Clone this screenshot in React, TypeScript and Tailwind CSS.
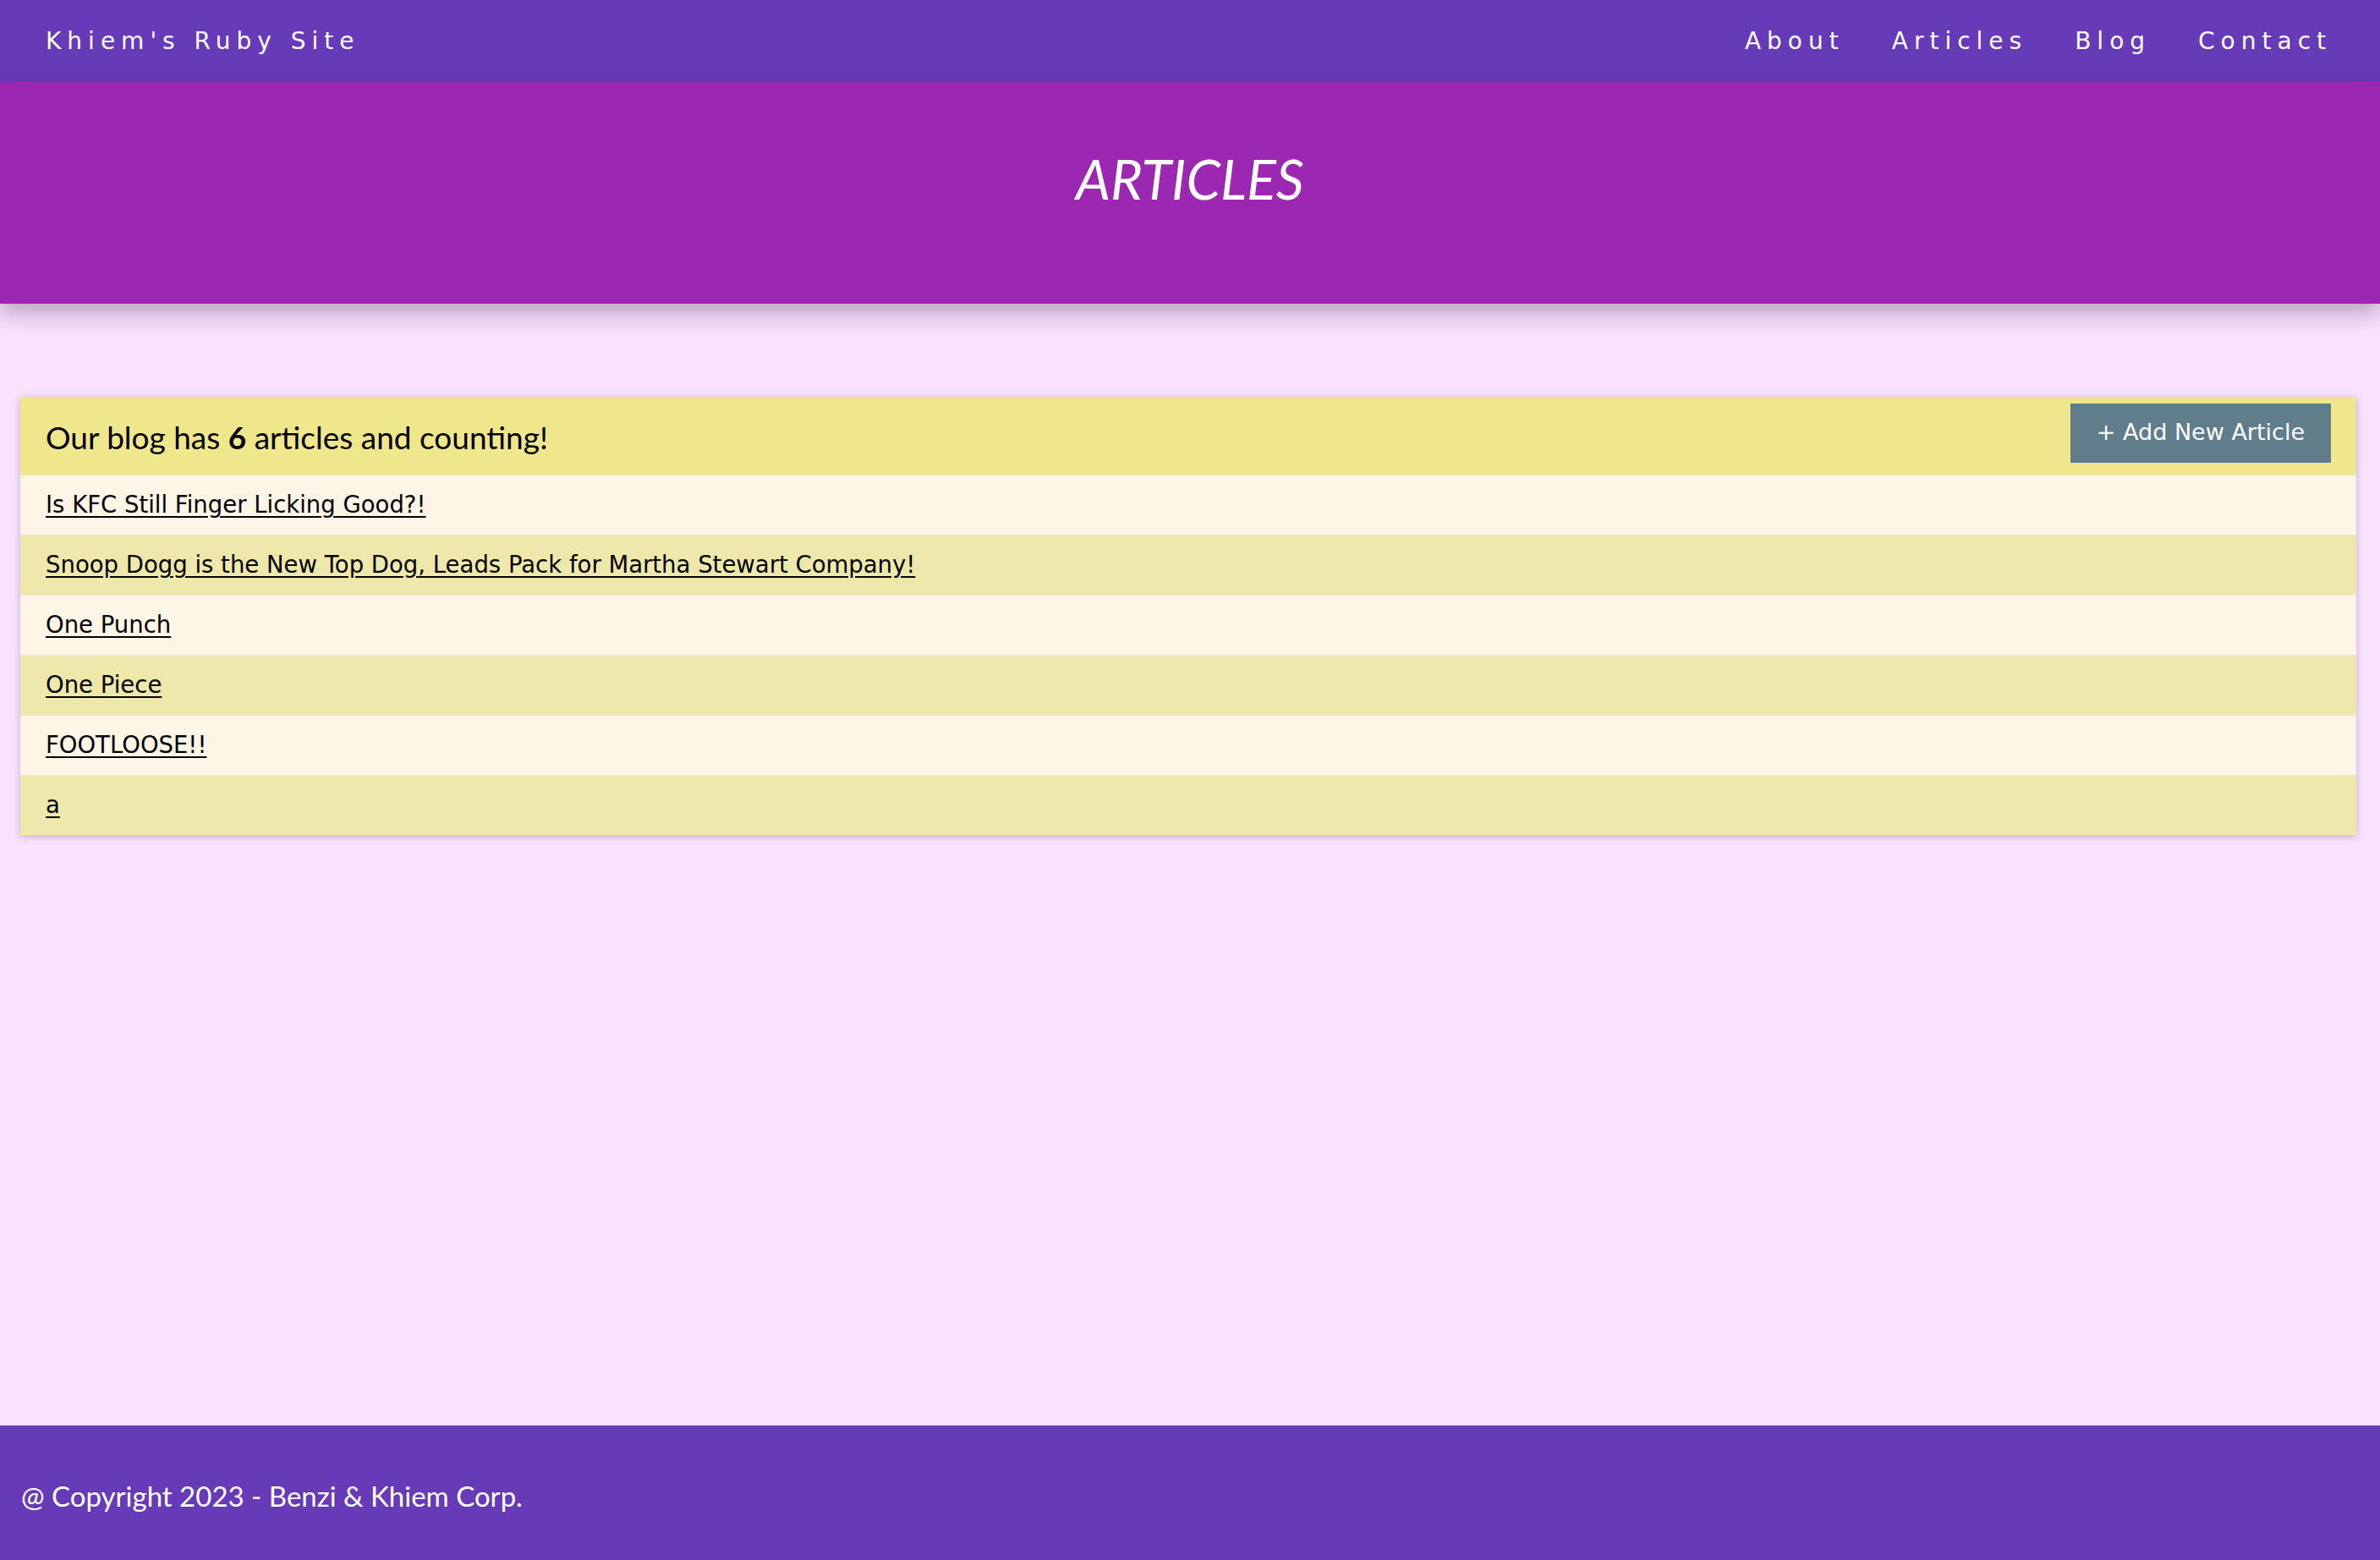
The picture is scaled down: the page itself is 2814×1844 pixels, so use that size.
const articles: string[] = [
  "Is KFC Still Finger Licking Good?!",
  "Snoop Dogg is the New Top Dog, Leads Pack for Martha Stewart Company!",
  "One Punch",
  "One Piece",
  "FOOTLOOSE!!",
  "a",
];

const navLinks = ["About", "Articles", "Blog", "Contact"];

const App: React.FC = () => {
  return (
    <div className="min-h-screen flex flex-col bg-[#f8e2fd] font-['Lato',sans-serif]">
      {/* top navigation */}
      <nav className="h-[97px] bg-[#673ab7] flex items-center justify-between pl-[54px] pr-[57px] text-white font-['DejaVu_Sans',sans-serif] text-[28px] tracking-[7px]">
        <a href="#" className="leading-none">Khiem's Ruby Site</a>
        <ul className="flex items-center gap-[56px]">
          {navLinks.map((link) => (
            <li key={link}>
              <a href="#" className="leading-none">{link}</a>
            </li>
          ))}
        </ul>
      </nav>

      {/* page heading */}
      <header className="relative h-[262px] bg-[#9c27b0] shadow-[0_12px_24px_rgba(60,20,70,0.3)] flex justify-center pt-[82px]">
        <h1 className="text-white italic text-[65px] leading-none h-fit">ARTICLES</h1>
      </header>

      <main className="flex-1 pt-[110px] pl-[24px] pr-[28px]">
        <div className="shadow-[0_2px_8px_rgba(90,60,110,0.3)]">
          <div className="h-[92px] bg-[#f0e68c] flex items-center justify-between pl-[30px] pr-[30px]">
            <p className="text-[37px] text-black leading-none pt-[2px]">
              Our blog has <strong className="font-bold">6</strong> articles and counting!
            </p>
            <button className="h-[70px] px-[31px] bg-[#607d8b] text-white font-['DejaVu_Sans',sans-serif] text-[27px] -mt-[7px]">
              + Add New Article
            </button>
          </div>
          {articles.map((title, i) => (
            <div
              key={title}
              className={
                i % 2 === 0
                  ? "h-[71px] flex items-center pl-[30px] bg-[#fdf5e6] border-t border-[#ebe5d8]"
                  : "h-[71px] flex items-center pl-[30px] bg-[#eee8aa] border-t border-[#ebe5d8]"
              }
            >
              <a href="#" className="font-['DejaVu_Sans',sans-serif] text-[27.5px] text-black underline underline-offset-[4px]">
                {title}
              </a>
            </div>
          ))}
        </div>
      </main>

      <footer className="h-[159px] bg-[#673ab7] flex items-center px-[25px] pt-[8px]">
        <p className="text-white text-[33px]">@ Copyright 2023 - Benzi &amp; Khiem Corp.</p>
      </footer>
    </div>
  );
};

export default App;
